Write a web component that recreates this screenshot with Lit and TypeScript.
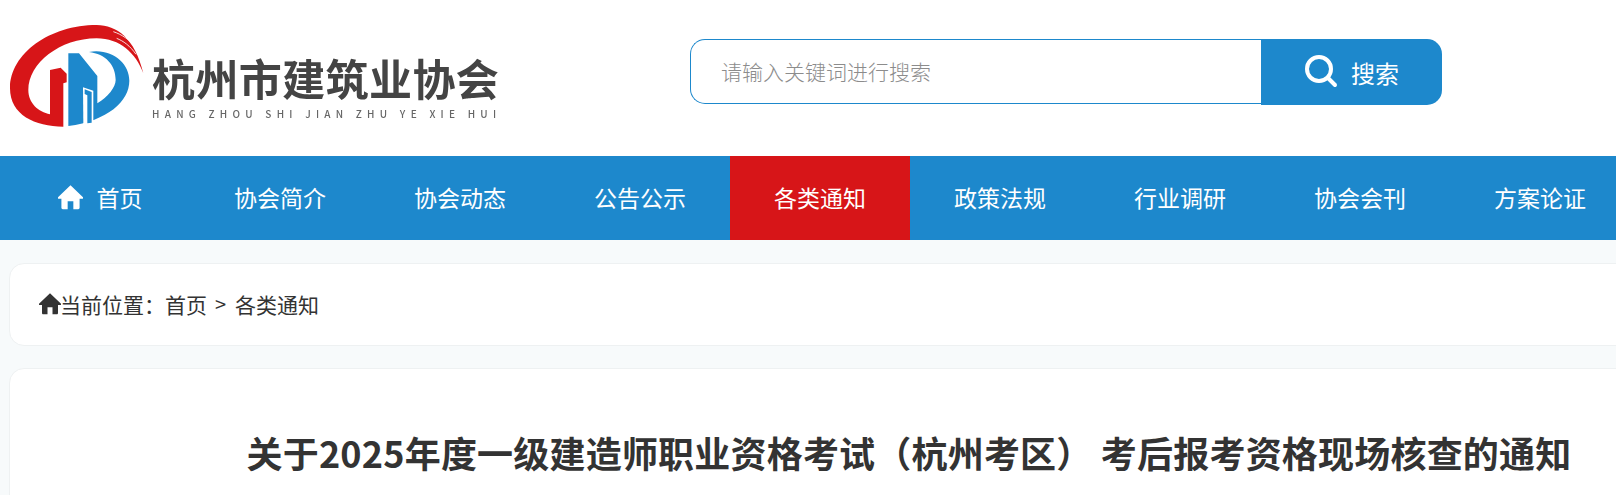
import { LitElement, html, css, svg } from "lit";
import { customElement } from "lit/decorators.js";

const NAV = ["协会简介", "协会动态", "公告公示", "各类通知", "政策法规", "行业调研", "协会会刊", "方案论证"];

const homeIcon = svg`<path d="M12 2.2 1 12.2c-.5.5-.2 1.3.5 1.3H4v7.6c0 .7.5 1.2 1.2 1.2h4.3v-6.6h5v6.6h4.3c.7 0 1.2-.5 1.2-1.2v-7.6h2.5c.7 0 1-.8.5-1.3z"/>`;

@customElement("app-root")
export class AppRoot extends LitElement {
  static styles = css`
    :host { display: block; width: 100%; height: 495px; overflow: hidden; background: #f7fafb; font-family: "Noto Sans CJK SC", "Liberation Sans", sans-serif; }
    .page { width: 1820px; }
    .header { height: 156px; background: #fff; display: flex; }
    .logo { display: flex; margin: 20px 0 0 0; width: 520px; }
    .mark { width: 140px; height: 115px; flex: none; overflow: visible; filter: blur(0.4px); }
    .brand { margin: 32px 0 0 12px; color: #444; filter: blur(0.3px); }
    .brand-cn { font-size: 43px; line-height: 50px; font-weight: 700; letter-spacing: 0.4px; white-space: nowrap; }
    .brand-en { font-size: 10px; line-height: 12px; margin-top: 6px; letter-spacing: 5.25px; font-weight: 500; color: #666; white-space: nowrap; }
    .search { display: flex; margin: 39px 0 0 170px; height: 66px; width: 752px; }
    .input { width: 571px; height: 65px; box-sizing: border-box; border: 1px solid #1d88cc; border-right: 0; border-radius: 15px 0 0 15px; padding: 0 0 2px 30px; display: flex; align-items: center; font-size: 21px; color: #8c8c8c; font-weight: 300; }
    .btn { flex: none; width: 181px; height: 66px; background: #1d88cc; border-radius: 0 15px 15px 0; color: #fff; display: flex; align-items: center; justify-content: center; gap: 13px; font-size: 24px; box-sizing: border-box; }
    .btn svg { width: 34px; height: 34px; fill: none; stroke: #fff; stroke-width: 4; margin-top: -2px; }
    .nav { display: flex; height: 84px; padding-left: 10px; background: #1d88cc; }
    .item { flex: none; width: 180px; height: 82px; display: flex; align-items: center; justify-content: center; gap: 14px; color: #fff; font-size: 23px; }
    .item.on { height: 84px; background: #d71518; padding-bottom: 2px; box-sizing: border-box; }
    .item svg { width: 25px; height: 25px; fill: #fff; }
    .card { margin-left: 9px; width: 1800px; background: #fff; border: 1px solid #eef1f2; border-radius: 15px; box-sizing: border-box; }
    .crumb { height: 83px; margin-top: 23px; display: flex; align-items: center; padding: 0 0 2px 29px; font-size: 21px; color: #333; }
    .crumb svg { width: 22px; height: 22px; fill: #333; flex: none; margin-right: -1px; }
    .sep { margin: 0 9px 0 8px; font-size: 20px; }
    .article { margin-top: 22px; height: 200px; padding-top: 53px; text-align: center; }
    h1 { margin: 0; font-size: 36px; line-height: 60px; font-weight: 700; letter-spacing: 0.2px; color: #333; white-space: nowrap; }
  `;

  render() {
    return html`<div class="page">
      <div class="header">
        <div class="logo">
          <svg class="mark" viewBox="0 0 420 345">
            <path fill="#d71518" d="M190 320C105 320 30 285 30 205 30 100 150 15 290 15c60 0 115 40 140 145-22-60-70-105-140-105C180 55 85 130 85 210c0 40 30 65 65 73V150l32-7 18 18v26l-10 3z"/>
            <path fill="none" stroke="#fff" stroke-width="2.5" d="M340 35c25 8 50 25 70 50M350 55c20 8 40 22 58 48"/>
            <path fill="#1d88cc" d="M205 318V100h32l55 68v82c32-20 55-48 55-70 0-45-30-78-80-84 70-12 121 35 121 86 0 62-65 120-183 136z"/>
            <path fill="#fff" d="M249 202l31 10v96l-30 5z"/>
            <path fill="#1d88cc" d="M254 208l21 8v92l-13 2v-84l-8-4z"/>
          </svg>
          <div class="brand">
            <div class="brand-cn">杭州市建筑业协会</div>
            <div class="brand-en">HANG ZHOU SHI JIAN ZHU YE XIE HUI</div>
          </div>
        </div>
        <div class="search">
          <div class="input">请输入关键词进行搜索</div>
          <div class="btn">
            <svg viewBox="0 0 34 34"><circle cx="15" cy="15" r="12"/><path d="m24 24 7 7" stroke-linecap="round"/></svg>
            <span>搜索</span>
          </div>
        </div>
      </div>
      <div class="nav">
        <div class="item"><svg viewBox="1 2 22 21" preserveAspectRatio="none">${homeIcon}</svg><span>首页</span></div>
        ${NAV.map((n) => html`<div class="item ${n === "各类通知" ? "on" : ""}">${n}</div>`)}
      </div>
      <div class="card crumb">
        <svg viewBox="1 2 22 21" preserveAspectRatio="none">${homeIcon}</svg><span>当前位置：首页</span><span class="sep">&gt;</span><span>各类通知</span>
      </div>
      <div class="card article">
        <h1>关于2025年度一级建造师职业资格考试（杭州考区） 考后报考资格现场核查的通知</h1>
      </div>
    </div>`;
  }
}
